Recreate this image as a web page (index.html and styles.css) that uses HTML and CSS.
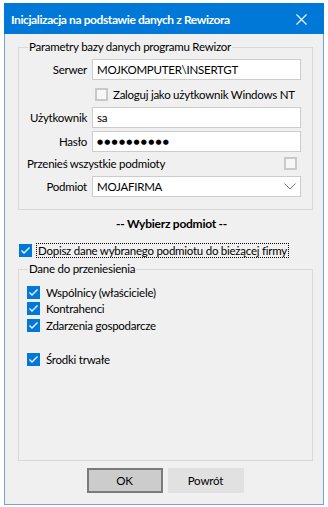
FILE: index.html
```html
<!DOCTYPE html>
<html lang="pl">
<head>
  <meta charset="UTF-8" />
  <meta name="viewport" content="width=device-width, initial-scale=1.0"/>
  <title>Inicjalizacja na podstawie danych z Rewizora</title>

  <link rel="stylesheet" href="styles.css">
</head>

<body>
  <div class="window">
    <div class="titlebar">
      <span class="title">Inicjalizacja na podstawie danych z Rewizora</span>
      <svg class="close" width="11" height="11" viewBox="0 0 11 11">
        <path d="M0.5 0.5 L10.5 10.5 M10.5 0.5 L0.5 10.5" stroke="#fff" stroke-width="1.1" fill="none"/>
      </svg>
    </div>

    <div class="content">
      <fieldset class="group group-db">
        <legend>Parametry bazy danych programu Rewizor</legend>

        <div class="field">
          <label>Serwer</label>
          <div class="input">MOJKOMPUTER\INSERTGT</div>
        </div>

        <div class="check nt">
          <span class="box"></span>
          <span>Zaloguj jako użytkownik Windows NT</span>
        </div>

        <div class="field user">
          <label>Użytkownik</label>
          <div class="input">sa</div>
        </div>

        <div class="field pass">
          <label>Hasło</label>
          <div class="input"><span class="dots">●●●●●●●●●●</span></div>
        </div>

        <div class="check all">
          <span>Przenieś wszystkie podmioty</span>
          <span class="box"></span>
        </div>

        <div class="field subject">
          <label>Podmiot</label>
          <div class="input select">
            <span>MOJAFIRMA</span>
            <svg width="12" height="7" viewBox="0 0 12 7">
              <polyline points="0.5,0.5 6,6 11.5,0.5" stroke="#7a7a7a" stroke-width="1" fill="none"/>
            </svg>
          </div>
        </div>
      </fieldset>

      <div class="heading">-- Wybierz podmiot --</div>

      <div class="check append">
        <span class="box checked">
          <svg width="13" height="13" viewBox="0 0 13 13"><polyline points="2.5,6.5 5,9 10.5,3.5" stroke="#fff" stroke-width="1.3" fill="none"/></svg>
        </span>
        <span class="focus">Dopisz dane wybranego podmiotu do bieżącej firmy</span>
      </div>

      <fieldset class="group group-data">
        <legend>Dane do przeniesienia</legend>

        <div class="check item">
          <span class="box checked">
            <svg width="13" height="13" viewBox="0 0 13 13"><polyline points="2.5,6.5 5,9 10.5,3.5" stroke="#fff" stroke-width="1.3" fill="none"/></svg>
          </span>
          <span>Wspólnicy (właściciele)</span>
        </div>
        <div class="check item second">
          <span class="box checked">
            <svg width="13" height="13" viewBox="0 0 13 13"><polyline points="2.5,6.5 5,9 10.5,3.5" stroke="#fff" stroke-width="1.3" fill="none"/></svg>
          </span>
          <span>Kontrahenci</span>
        </div>
        <div class="check item third">
          <span class="box checked">
            <svg width="13" height="13" viewBox="0 0 13 13"><polyline points="2.5,6.5 5,9 10.5,3.5" stroke="#fff" stroke-width="1.3" fill="none"/></svg>
          </span>
          <span>Zdarzenia gospodarcze</span>
        </div>
        <div class="check item fourth">
          <span class="box checked">
            <svg width="13" height="13" viewBox="0 0 13 13"><polyline points="2.5,6.5 5,9 10.5,3.5" stroke="#fff" stroke-width="1.3" fill="none"/></svg>
          </span>
          <span>Środki trwałe</span>
        </div>
      </fieldset>

      <div class="buttons">
        <button class="btn btn-default">OK</button>
        <button class="btn">Powrót</button>
      </div>
    </div>
  </div>
</body>
</html>
```

FILE: styles.css
```css
body {
  margin: 0;
  background: #fff;
  font-family: Lato, "Noto Sans", sans-serif;
  font-size: 11.5px;
  letter-spacing: -0.25px;
  color: #000;
}

.window {
  box-sizing: border-box;
  width: 320px;
  height: 502px;
  margin: 3px 0 0 4px;
  border: 1px solid #7aa0d8;
  background: #f0f0f0;
  display: flex;
  flex-direction: column;
}

.titlebar {
  height: 30px;
  background: #0078d7;
  color: #fff;
  display: flex;
  align-items: center;
  justify-content: space-between;
  margin: -1px -1px 0 -1px;
  padding: 1px 17px 0 7px;
}

.title {
  font-weight: bold;
  font-size: 12px;
  letter-spacing: -0.4px;
}

.close {
  display: block;
}

.content {
  flex: 1;
  display: flex;
  flex-direction: column;
}

/* group boxes */
.group {
  width: 295px;
  box-sizing: border-box;
  margin: 0 0 0 13px;
  border: 1px solid #d9d9d9;
  padding: 0;
  min-width: 0;
}

.group legend {
  margin-left: 9px;
  padding: 0 1px;
  line-height: 16px;
}

.group-db {
  margin-top: 5px;
  padding: 4px 0 12px 0;
}

.group-data {
  margin-top: 3px;
  padding: 9px 0 94px 0;
}

.field {
  display: flex;
  align-items: center;
  height: 21px;
}

.field label {
  width: 68px;
  margin-right: 5px;
  text-align: right;
}

.input {
  box-sizing: border-box;
  width: 209px;
  height: 21px;
  background: #fff;
  border: 1px solid #cccccc;
  padding: 0 4px;
  display: flex;
  align-items: center;
}

.dots {
  font-family: "DejaVu Sans", sans-serif;
  font-size: 7px;
  letter-spacing: 1.2px;
}

.select {
  justify-content: space-between;
  padding-right: 4px;
}

.select svg {
  display: block;
}

.user { margin-top: 6px; }
.pass { margin-top: 3px; }
.subject { margin-top: 6px; }

/* checkboxes */
.check {
  display: flex;
  align-items: center;
  height: 13px;
}

.box {
  box-sizing: border-box;
  width: 13px;
  height: 13px;
  border: 2px solid #c9c9c9;
  background: #f7f7f7;
  flex: none;
}

.box.checked {
  border: none;
  background: #0078d7;
}

.box svg {
  display: block;
}

.nt {
  margin: 8px 0 0 76px;
  gap: 5px;
}

.all {
  margin: 5px 0 0 8px;
  width: 270px;
  justify-content: space-between;
}

.heading {
  margin-top: 6px;
  padding-left: 15px;
  text-align: center;
  font-weight: bold;
  font-size: 12px;
  line-height: 16px;
}

.append {
  height: 15px;
  margin: 11px 0 0 14px;
  gap: 4px;
}

.focus {
  border: 1px dotted #000;
  padding: 0 1px;
  line-height: 13px;
}

.item {
  margin-left: 8px;
  gap: 6px;
}

.second { margin-top: 3px; }
.third { margin-top: 4px; }
.fourth { margin-top: 21px; }

/* buttons */
.buttons {
  display: flex;
  justify-content: center;
  gap: 5px;
  margin-top: 7px;
  padding-left: 2px;
}

.btn {
  box-sizing: border-box;
  width: 76px;
  height: 25px;
  font-family: Lato, "Noto Sans", sans-serif;
  font-size: 11.5px;
  letter-spacing: -0.15px;
  color: #000;
  background: #e1e1e1;
  border: 1px solid #e1e1e1;
  padding: 0;
}

.btn-default {
  background: #cccccc;
  border: 2px solid #7a7a7a;
}
```
